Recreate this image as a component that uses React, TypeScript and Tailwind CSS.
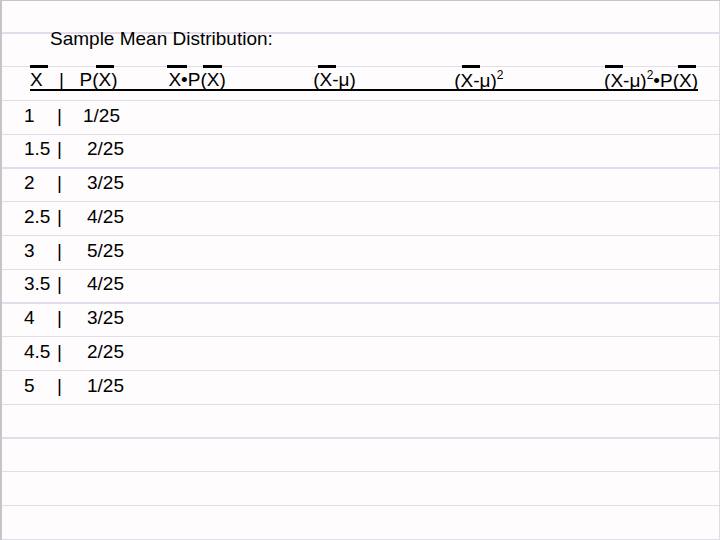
const rows = [
  { x: "1", p: "1/25", first: true },
  { x: "1.5", p: "2/25" },
  { x: "2", p: "3/25" },
  { x: "2.5", p: "4/25" },
  { x: "3", p: "5/25" },
  { x: "3.5", p: "4/25" },
  { x: "4", p: "3/25" },
  { x: "4.5", p: "2/25" },
  { x: "5", p: "1/25" },
];

// bar over a mean symbol, x measured from the header's left edge
const bars = [
  "left-[0px] w-[18px]",
  "left-[66px] w-[18px]",
  "left-[137px] w-[20px]",
  "left-[173px] w-[19px]",
  "left-[288px] w-[18px]",
  "left-[432px] w-[18px]",
  "left-[575px] w-[18px]",
  "left-[648px] w-[18px]",
];

function Sq() {
  return <sup className="relative top-[-1px] align-super text-[12px] leading-none">2</sup>;
}

export default function App() {
  return (
    <div className="w-[720px] h-[540px] overflow-hidden bg-[#fefcfd] bg-[image:repeating-linear-gradient(to_bottom,transparent_0,transparent_32.35px,#e4dcea_32.35px,#e4dcea_33.75px)] shadow-[inset_2px_1px_0_#c6c6c6,inset_-1px_0_0_#dddddd] font-['Liberation_Sans',Arial,sans-serif] text-[19px] leading-[20px] text-black">
      <div className="pt-[29px] pl-[50px]">Sample Mean Distribution:</div>

      <div className="relative mt-[21px] ml-[30px] w-[668px] h-[21px] border-b-2 border-black flex whitespace-nowrap">
        {bars.map((b) => (
          <span key={b} className={`absolute top-[-5px] h-[3px] bg-black ${b}`} />
        ))}
        <span className="w-[29px]">X</span>
        <span className="w-[20.5px]">|</span>
        <span className="w-[89px]">P(X)</span>
        <span className="w-[145px]">X•P(X)</span>
        <span className="w-[141px]">(X-μ)</span>
        <span className="w-[150px]">
          (X-μ)<Sq />
        </span>
        <span>
          (X-μ)<Sq />•P(X)
        </span>
      </div>

      <div className="mt-[7.5px] pl-[24px]">
        {rows.map((r) => (
          <div key={r.x} className="flex h-[33.75px] leading-[33.75px]">
            <span className="w-[33px]">{r.x}</span>
            <span className={r.first ? "w-[26px]" : "w-[30px]"}>|</span>
            <span>{r.p}</span>
          </div>
        ))}
      </div>
    </div>
  );
}
